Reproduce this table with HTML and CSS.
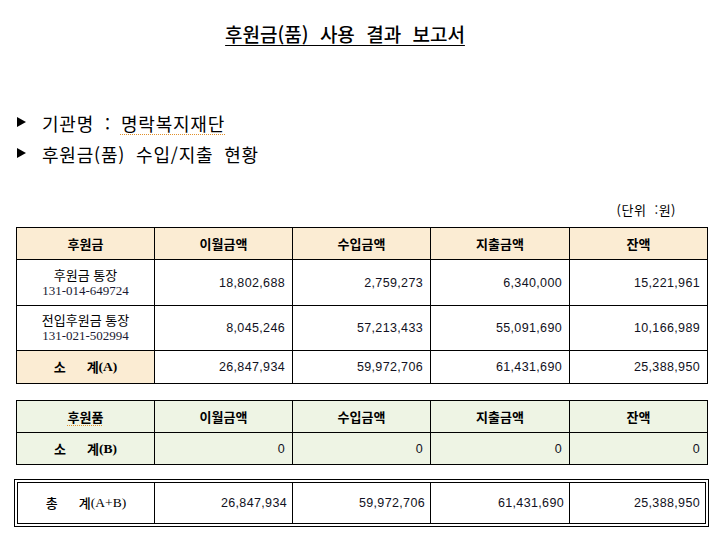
FILE: index.html
```html
<!DOCTYPE html>
<html lang="ko">
<head>
<meta charset="utf-8">
<title>후원금(품) 사용 결과 보고서</title>
<link rel="stylesheet" href="styles.css">
</head>
<body>
<div class="page">
  <h1 class="title">후원금(품) 사용 결과 보고서</h1>

  <ul class="bullets">
    <li><svg class="tri" width="9" height="10" viewBox="0 0 9 10"><polygon points="0,0 9,5 0,10"/></svg><span class="btext">기관명<span class="colon">:</span><span class="spell">명락복지재단</span></span></li>
    <li><svg class="tri" width="9" height="10" viewBox="0 0 9 10"><polygon points="0,0 9,5 0,10"/></svg><span class="btext">후원금(품) 수입/지출 현황</span></li>
  </ul>

  <div class="unit">(단위 :원)</div>

  <div class="sheet cash">
    <div class="cell head">후원금</div>
    <div class="cell head">이월금액</div>
    <div class="cell head">수입금액</div>
    <div class="cell head">지출금액</div>
    <div class="cell head">잔액</div>

    <div class="cell label"><span>후원금 통장</span><span class="acct">131-014-649724</span></div>
    <div class="cell num">18,802,688</div>
    <div class="cell num">2,759,273</div>
    <div class="cell num">6,340,000</div>
    <div class="cell num">15,221,961</div>

    <div class="cell label"><span>전입후원금 통장</span><span class="acct">131-021-502994</span></div>
    <div class="cell num">8,045,246</div>
    <div class="cell num">57,213,433</div>
    <div class="cell num">55,091,690</div>
    <div class="cell num">10,166,989</div>

    <div class="cell head sub">소<span class="gap"></span>계<span class="lat">(A)</span></div>
    <div class="cell num">26,847,934</div>
    <div class="cell num">59,972,706</div>
    <div class="cell num">61,431,690</div>
    <div class="cell num">25,388,950</div>
  </div>

  <div class="sheet goods">
    <div class="cell head"><span class="spell">후원품</span></div>
    <div class="cell head">이월금액</div>
    <div class="cell head">수입금액</div>
    <div class="cell head">지출금액</div>
    <div class="cell head">잔액</div>

    <div class="cell head sub">소<span class="gap"></span>계<span class="lat">(B)</span></div>
    <div class="cell num">0</div>
    <div class="cell num">0</div>
    <div class="cell num">0</div>
    <div class="cell num">0</div>
  </div>

  <div class="frame">
    <div class="sheet total">
      <div class="cell tlabel">총<span class="gap"></span>계<span class="lat">(A+B)</span></div>
      <div class="cell num">26,847,934</div>
      <div class="cell num">59,972,706</div>
      <div class="cell num">61,431,690</div>
      <div class="cell num">25,388,950</div>
    </div>
  </div>
</div>
</body>
</html>
```

FILE: styles.css
```css
* {
  box-sizing: border-box;
}

html, body {
  margin: 0;
  padding: 0;
  background: #ffffff;
}

body {
  font-family: "Noto Sans CJK KR", "Noto Sans", sans-serif;
  color: #000000;
}

.page {
  width: 722px;
  padding: 23px 0 0 0;
}

.title {
  margin: 0;
  padding-right: 32px;
  text-align: center;
  font-size: 19px;
  line-height: 22px;
  font-weight: 500;
  word-spacing: 6px;
  text-decoration: underline;
  text-decoration-thickness: 1px;
  text-underline-offset: 3px;
}

.bullets {
  list-style: none;
  margin: 63px 0 0 17px;
  padding: 0;
}

.bullets li {
  display: flex;
  align-items: center;
  height: 31px;
  font-size: 18px;
  line-height: 31px;
}

.tri {
  display: block;
  flex: none;
  margin-right: 16px;
  margin-top: -3px;
}

.tri polygon {
  fill: #000000;
}

.btext {
  letter-spacing: 0.8px;
  word-spacing: 5px;
}

.colon {
  margin: 0 10px 0 11px;
}

.spell {
  text-decoration: underline dotted #e0902a;
  text-decoration-thickness: 1px;
  text-underline-offset: 3px;
}

.unit {
  width: 692px;
  margin: 32px 0 0 16px;
  padding-right: 32px;
  text-align: right;
  font-size: 13px;
  line-height: 16px;
  letter-spacing: 0.5px;
  word-spacing: 4px;
}

.sheet {
  display: grid;
  border-left: 1px solid #000000;
  border-top: 1px solid #000000;
}

.cash,
.goods {
  width: 692px;
  margin-left: 16px;
  grid-template-columns: 138px 138px 138px 139px 138px;
}

.cash {
  margin-top: 9px;
  grid-template-rows: 32px 46px 45px 33px;
}

.goods {
  margin-top: 16px;
  grid-template-rows: 32px 32px;
}

.cell {
  display: flex;
  align-items: center;
  justify-content: center;
  border-right: 1px solid #000000;
  border-bottom: 1px solid #000000;
  font-size: 13px;
  line-height: 16px;
}

.head {
  font-weight: 700;
}

.cash .head {
  background: #fbecd3;
}

.goods .cell {
  background: #eef4e4;
}

.label {
  flex-direction: column;
  font-size: 13px;
}

.acct {
  font-family: "Liberation Serif", serif;
  font-size: 13px;
  color: #1a1a33;
}

.num {
  justify-content: flex-end;
  padding-right: 7px;
  font-family: "Liberation Sans", sans-serif;
  font-size: 12.5px;
  letter-spacing: 0.35px;
  color: #111122;
}

.gap {
  display: inline-block;
  width: 21px;
}

.lat {
  font-family: "Liberation Serif", serif;
  font-size: 13.5px;
}

.frame {
  width: 695px;
  margin: 14px 0 0 14px;
  padding: 2px;
  border: 1px solid #000000;
}

.total {
  width: 689px;
  grid-template-columns: 137px 138px 138px 139px 136px;
  grid-template-rows: 41px;
}

.total .num {
  padding-right: 5px;
}

.tlabel {
  font-weight: 500;
}
```
